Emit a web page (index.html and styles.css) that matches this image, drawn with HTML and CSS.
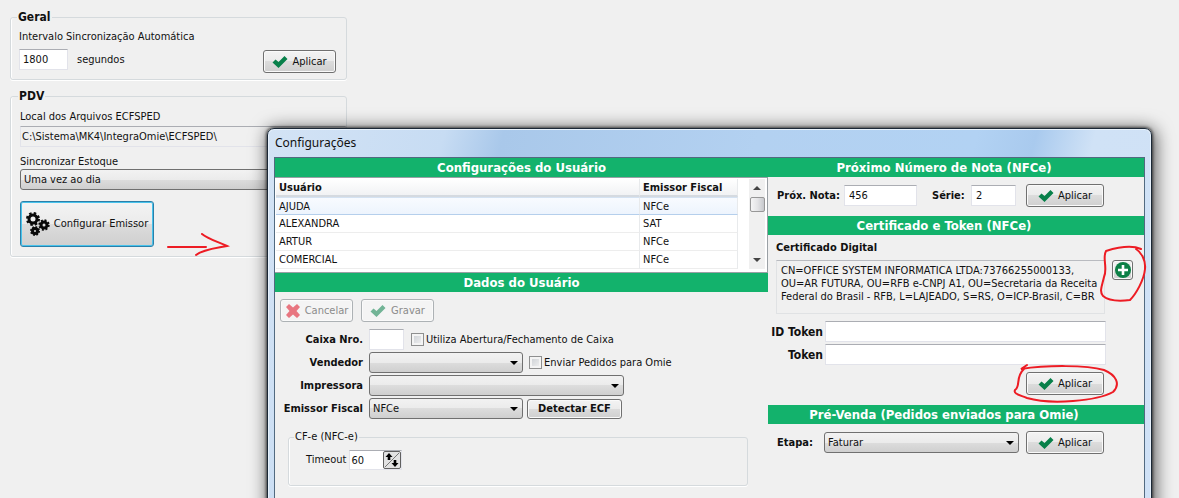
FILE: index.html
```html
<!DOCTYPE html>
<html lang="pt-BR">
<head>
<meta charset="utf-8">
<title>Configurações</title>
<link rel="stylesheet" href="styles.css">
</head>
<body>
<svg class="defs" aria-hidden="true">
  <symbol id="check" viewBox="0 0 16 14"><path d="M0.500 7.500 3.500 4.500 6.500 7 12.500 1 15.500 4 6.500 13z"/></symbol>
  <symbol id="cross" viewBox="0 0 16 16"><path d="M1 4 4 1 8 4.500 12 1 15 4 11.500 8 15 12 12 15 8 11.500 4 15 1 12 4.500 8z"/></symbol>
</svg>

<main class="desktop">
  <section class="settings">
    <fieldset class="group group-general">
      <legend>Geral</legend>
      <label for="interval">Intervalo Sincronização Automática</label>
      <div class="general-row">
        <input class="field interval" id="interval" value="1800">
        <span class="unit">segundos</span>
        <button class="btn"><svg class="icon-check"><use href="#check"/></svg>Aplicar</button>
      </div>
    </fieldset>
    <fieldset class="group group-pdv">
      <legend>PDV</legend>
      <label for="path">Local dos Arquivos ECFSPED</label>
      <input class="field readonly" id="path" value="C:\Sistema\MK4\IntegraOmie\ECFSPED\" readonly>
      <label class="stock-label" for="stock">Sincronizar Estoque</label>
      <span class="combo"><select id="stock"><option>Uma vez ao dia</option></select></span>
      <button class="btn configure">
        <svg class="gears" viewBox="0 0 24 24" fill="none" stroke="#0a0a0a">
          <g stroke-width="3"><circle cx="7" cy="7" r="4"/><circle cx="18" cy="13" r="3"/><circle cx="9" cy="19" r="2.500"/></g>
          <g stroke-width="2.600"><circle cx="7" cy="7" r="5.700" stroke-dasharray="2.400 2.080"/></g>
          <g stroke-width="2.200"><circle cx="18" cy="13" r="4.600" stroke-dasharray="1.900 1.710"/><circle cx="9" cy="19" r="3.900" stroke-dasharray="1.600 1.460"/></g>
        </svg>Configurar Emissor
      </button>
    </fieldset>
  </section>

  <section class="window">
    <header class="titlebar">Configurações</header>
    <div class="client">
      <div class="column">
        <h2 class="band">Configurações do Usuário</h2>
        <div class="list">
          <table class="users">
            <thead><tr><th>Usuário</th><th class="issuer">Emissor Fiscal</th></tr></thead>
            <tbody>
              <tr class="selected"><td>AJUDA</td><td>NFCe</td></tr>
              <tr><td>ALEXANDRA</td><td>SAT</td></tr>
              <tr><td>ARTUR</td><td>NFCe</td></tr>
              <tr><td>COMERCIAL</td><td>NFCe</td></tr>
            </tbody>
          </table>
          <div class="scrollbar"><i class="up"></i><i class="thumb"></i><i class="down"></i></div>
        </div>
        <h2 class="band">Dados do Usuário</h2>
        <div class="actions">
          <button class="btn" disabled><svg class="icon-cross"><use href="#cross"/></svg>Cancelar</button>
          <button class="btn" disabled><svg class="icon-check"><use href="#check"/></svg>Gravar</button>
        </div>
        <div class="form">
          <label for="cashier">Caixa Nro.</label>
          <div class="line"><input class="field cashier" id="cashier"><label class="tick"><input type="checkbox">Utiliza Abertura/Fechamento de Caixa</label></div>
          <label for="seller">Vendedor</label>
          <div class="line"><span class="combo seller"><select id="seller"><option></option></select></span><label class="tick"><input type="checkbox">Enviar Pedidos para Omie</label></div>
          <label for="printer">Impressora</label>
          <div class="line"><span class="combo printer"><select id="printer"><option></option></select></span></div>
          <label for="issuer">Emissor Fiscal</label>
          <div class="line issuer-line"><span class="combo seller"><select id="issuer"><option>NFCe</option></select></span><button class="btn detect">Detectar ECF</button></div>
        </div>
        <fieldset class="group group-cfe">
          <legend>CF-e (NFC-e)</legend>
          <div class="timeout">
            <label for="timeout">Timeout</label>
            <span class="spin"><input class="field" id="timeout" value="60"><button class="spin-button" aria-label="Ajustar timeout"><svg viewBox="0 0 16 16"><path d="M1 15 15 1" stroke="#777"/><path d="M5 1 8.500 5H6.300V8H3.700V5H1.500zM11 15 7.500 11H9.700V8H12.300V11H14.500z"/></svg></button></span>
          </div>
        </fieldset>
      </div>

      <div class="column side">
        <h2 class="band">Próximo Número de Nota (NFCe)</h2>
        <div class="invoice">
          <label for="next">Próx. Nota:</label><input class="field next" id="next" value="456">
          <label class="serie-label" for="serie">Série:</label><input class="field serie" id="serie" value="2">
          <button class="btn apply"><svg class="icon-check"><use href="#check"/></svg>Aplicar</button>
        </div>
        <h2 class="band">Certificado e Token (NFCe)</h2>
        <div class="certificate">
          <label for="cert">Certificado Digital</label>
          <div class="cert-row">
            <output class="cert" id="cert">CN=OFFICE SYSTEM INFORMATICA LTDA:73766255000133,<br>OU=AR FUTURA, OU=RFB e-CNPJ A1, OU=Secretaria da Receita<br>Federal do Brasil - RFB, L=LAJEADO, S=RS, O=ICP-Brasil, C=BR</output>
            <button class="btn add" aria-label="Adicionar certificado"><svg viewBox="0 0 16 16"><circle cx="8" cy="8" r="8" fill="#0c8046"/><path d="M8 3V13M3 8H13" stroke="#fff" stroke-width="2.600"/></svg></button>
          </div>
        </div>
        <div class="tokens">
          <label for="tokenid">ID Token</label><input class="field" id="tokenid">
          <label for="token">Token</label><input class="field" id="token">
        </div>
        <div class="token-apply"><button class="btn apply"><svg class="icon-check"><use href="#check"/></svg>Aplicar</button></div>
        <h2 class="band">Pré-Venda (Pedidos enviados para Omie)</h2>
        <div class="stage">
          <label for="stage">Etapa:</label><span class="combo"><select id="stage"><option>Faturar</option></select></span>
          <button class="btn apply"><svg class="icon-check"><use href="#check"/></svg>Aplicar</button>
        </div>
      </div>
    </div>
  </section>

  <svg class="ink ink-arrow" viewBox="0 0 64 24"><path d="M2 14H40M36 1C42 6 50 8 61 13C52 15 38 16 30 22"/></svg>
  <svg class="ink ink-add" viewBox="0 0 50 60"><path d="M43 5C34 1 21 3 8 7C4 14 10 24 6 33C4 42 1 47 5 52C12 58 24 57 32 56C38 50 46 36 47 25C48 16 43 8 38 5"/></svg>
  <svg class="ink ink-apply" viewBox="0 0 110 42"><path d="M14 2 8 6C34 2 73 2 91 7C103 12 108 21 100 29C84 38 38 42 14 35C7 32 0 31 2 27C8 23 2 14 11 6"/></svg>
</main>
</body>
</html>
```
FILE: styles.css
```css
* { box-sizing: border-box; }

body {
  margin: 0;
  background: #f0f0f0;
  color: #111;
  font: 11px/14px Tahoma, "DejaVu Sans Condensed", "DejaVu Sans", sans-serif;
}

button, input, select { font: inherit; color: inherit; margin: 0; }

.defs { position: absolute; width: 0; height: 0; }

.desktop { position: relative; min-height: 100vh; overflow: hidden; }

.settings {
  display: flex;
  flex-direction: column;
  gap: 9px;
  width: 347px;
  padding: 10px 0 0 10px;
}

.group {
  min-width: 0;
  margin: 0;
  border: 1px solid #d5dadd;
  border-radius: 3px;
  box-shadow: inset 1px 0 #fff, 0 1px #fff;
}
.group legend { padding: 0 1px; }
.settings legend { margin-left: -2px; font-size: 12px; font-weight: bold; }
.group-general { padding: 6px 10px 6px 8px; }
.group-pdv { display: flex; flex-direction: column; padding: 7px 0 9px 9px; }

.general-row { display: flex; align-items: flex-start; padding-top: 5px; }
.unit { padding: 4px 0 0 9px; }
.general-row .btn { width: 73px; margin: 1px 0 0 auto; }

.field {
  min-width: 0;
  width: 100%;
  height: 21px;
  padding: 0 4px 1px;
  border: 1px solid #e2e3ea;
  border-top-color: #abadb3;
  background: #fff;
}
.field.readonly { background: #f0f0f0; margin-top: 2px; padding-left: 1px; }
.interval { width: 49px; padding-left: 3px; }
.stock-label { margin-top: 8px; }

.btn {
  display: flex;
  align-items: center;
  justify-content: center;
  gap: 4px;
  height: 23px;
  padding: 0;
  white-space: nowrap;
  border: 1px solid #707070;
  border-radius: 3px;
  background: linear-gradient(#f3f3f3, #ebebeb 50%, #dcdcdc 50%, #cfcfcf);
  box-shadow: inset 0 0 0 1px #fafafa;
}
.apply { width: 78px; }
.btn[disabled] { background: #f4f4f4; border-color: #adb2b5; color: #8b8b8b; }
.btn[disabled] svg { opacity: 0.55; }
.icon-check { width: 16px; height: 14px; fill: #08804a; }
.icon-cross { width: 16px; height: 16px; fill: #e01022; }

.configure {
  width: 134px;
  height: 46px;
  margin-top: 11px;
  border: 1px solid #2c7fa8;
  box-shadow: inset 0 0 0 1px #48c3ec;
}
.gears { width: 24px; height: 24px; }

.combo { position: relative; display: block; min-width: 0; }
.combo select {
  appearance: none;
  display: block;
  width: 100%;
  height: 21px;
  padding: 0 20px 0 3px;
  border: 1px solid #707070;
  border-radius: 3px;
  background: linear-gradient(#f2f2f2, #ebebeb 50%, #dddddd 50%, #cfcfcf);
}
.combo::after {
  content: "";
  position: absolute;
  right: 5px;
  top: 9px;
  border: 4px solid transparent;
  border-top-color: #000;
  border-bottom-width: 0;
  pointer-events: none;
}

.window {
  position: absolute;
  top: 128px;
  left: 267px;
  right: 27px;
  bottom: -20px;
  display: flex;
  flex-direction: column;
  padding: 0 6px;
  border: 1px solid #1b2836;
  border-radius: 7px;
  background: linear-gradient(105deg, #d3e3f5, #c7dcf3 18%, #a9c8ea 24%, #b3d1f1 50%, #b2d2f3 72%, #a9caee 78%, #d0e2f6 84%, #cfe1f6);
  box-shadow: inset 0 0 0 1px #e8f2fc, 0 0 3px 1px rgba(0, 0, 0, 0.6), 2px 2px 17px 2px rgba(0, 0, 0, 0.6);
}
.titlebar { padding: 7px 1px; font: 12px/14px "Noto Sans", sans-serif; }
.client {
  flex: 1;
  display: grid;
  grid-template-columns: 493fr 376fr;
  border: 1px solid #526a80;
  background: #f0f0f0;
}
.column { min-width: 0; }

.band {
  margin: 0;
  color: #fff;
  background: #13b26c;
  text-align: center;
  font-size: 13px;
  font-weight: bold;
  line-height: 19px;
}
.side .band { padding-right: 24px; }

.list {
  display: flex;
  justify-content: space-between;
  height: 96px;
  padding: 1px 2px 3px 1px;
  border: 1px solid #9aa0a5;
  border-width: 1px 1px 1px 0;
  background: #fff;
}
.users { width: 462px; border-collapse: separate; border-spacing: 0; table-layout: fixed; }
.users th, .users td {
  height: 18px;
  padding: 1px 3px 0;
  text-align: left;
  border-right: 1px solid #e8eaec;
  border-bottom: 1px solid #ededed;
  line-height: 14px;
}
.users th { background: linear-gradient(#fff, #f1f2f4); border-bottom: 2px solid #d5dae0; }
.issuer { width: 98px; }
.users .selected td {
  border-top: 1px solid #d4e2f2;
  border-bottom: 1px solid #b5cfec;
  background: linear-gradient(#f8fbff, #edf4fd);
}

.scrollbar {
  display: flex;
  flex-direction: column;
  align-items: center;
  width: 16px;
  padding: 7px 0;
  background: #f0f0f0;
}
.up { border: 4px solid transparent; border-top-width: 0; border-bottom-color: #444; }
.down { margin-top: auto; border: 4px solid transparent; border-bottom-width: 0; border-top-color: #444; }
.thumb {
  width: 15px;
  height: 15px;
  margin-top: 7px;
  border: 1px solid #979797;
  border-radius: 2px;
  background: linear-gradient(90deg, #f5f5f5, #e4e4e6 50%, #c6c8cc);
}

.actions { display: flex; gap: 8px; padding: 7px 5px; }
.actions .btn { width: 73px; }
.actions .btn + .btn { gap: 5px; }

.form {
  display: grid;
  grid-template-columns: 88px 1fr;
  grid-auto-rows: 21px;
  gap: 2px 6px;
  align-items: center;
}
.form > label, .tokens label { font-weight: bold; text-align: right; white-space: nowrap; }
.tokens label { font-size: 12px; }
.line { display: flex; align-items: center; gap: 6px; }
.issuer-line { gap: 4px; }
.cashier { width: 35px; margin-right: 1px; }
.seller { width: 154px; }
.printer { width: 255px; }
.detect { width: 95px; height: 20px; font-weight: bold; }
.tick { display: flex; align-items: center; gap: 2px; white-space: nowrap; }
.tick input {
  appearance: none;
  width: 13px;
  height: 13px;
  border: 1px solid #8e8f8f;
  background: linear-gradient(135deg, #c9cdd2, #f4f4f4);
  box-shadow: inset 0 0 0 2px #f4f4f4;
}

.group-cfe { margin: 11px 20px 0 13px; padding: 6px 16px 15px 17px; }
.group-cfe legend { margin-left: -12px; }
.timeout { display: flex; align-items: center; gap: 3px; }
.spin { display: flex; width: 53px; background: #fff; border: 1px solid #e2e3ea; border-top-color: #abadb3; }
.spin .field { height: 18px; border: 0; padding: 0 1px; }
.spin-button { flex: none; width: 18px; height: 18px; padding: 0; border: 1px solid #606060; border-radius: 2px; background: #e2e2e2; }
.spin-button svg { display: block; }

.invoice, .stage { display: flex; align-items: center; padding: 7px 40px 9px 9px; }
.invoice label, .stage label, .certificate label { font-weight: bold; white-space: nowrap; }
.invoice .btn, .stage .btn { flex: none; margin-left: auto; }
.invoice label { width: 67px; }
.invoice .serie-label { width: 39px; margin-left: 15px; }
.next { width: 73px; }
.serie { width: 45px; }
.stage label { width: 47px; }
.stage .combo { flex: 1; margin-right: 7px; }

.certificate { padding: 6px 11px 0 8px; }
.certificate label { display: block; }
.cert-row { display: flex; align-items: flex-start; justify-content: space-between; padding-top: 5px; }
.cert {
  width: 329px;
  min-height: 54px;
  padding: 3px 4px;
  border: 1px solid #e0e2e4;
  border-top-color: #b9bbc0;
  line-height: 13px;
  white-space: nowrap;
}
.add { width: 21px; height: 20px; }
.add svg { width: 16px; height: 16px; }

.tokens {
  display: grid;
  grid-template-columns: 55px 1fr;
  gap: 2px;
  align-items: center;
  padding: 7px 38px 0 0;
}
.token-apply { display: flex; justify-content: flex-end; padding: 7px 40px 10px; }

.ink { position: absolute; fill: none; stroke: #ed1c24; stroke-width: 2; stroke-linecap: round; pointer-events: none; }
.ink-arrow { left: 166px; top: 233px; width: 64px; height: 24px; }
.ink-add { right: 31px; top: 244px; width: 50px; height: 60px; }
.ink-apply { right: 56px; top: 363px; width: 110px; height: 42px; }
```
